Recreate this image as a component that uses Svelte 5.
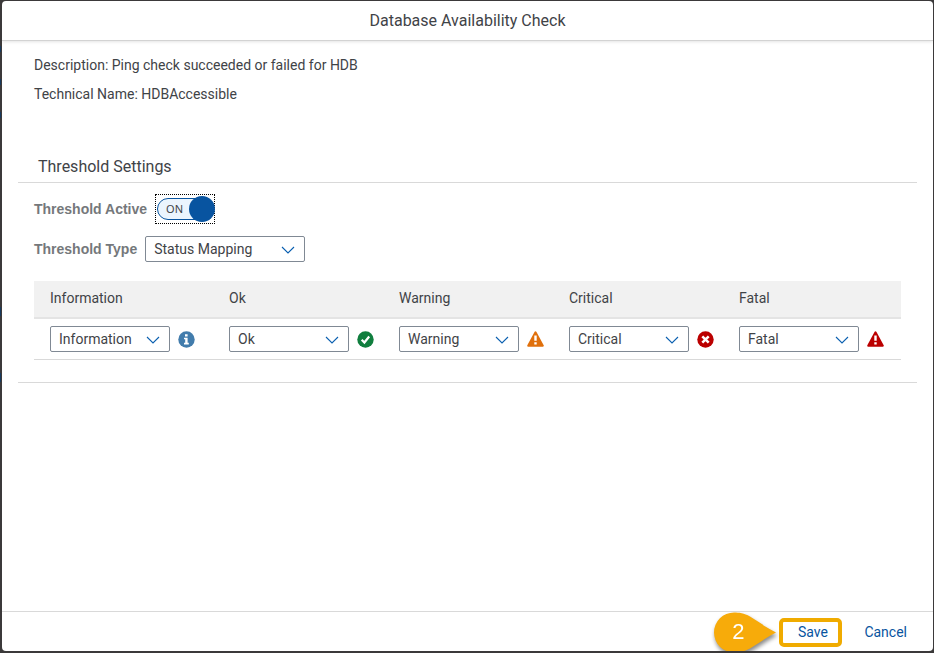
<script>
  const levels = [
    { name: 'Information', icon: 'info' },
    { name: 'Ok', icon: 'ok' },
    { name: 'Warning', icon: 'warning' },
    { name: 'Critical', icon: 'critical' },
    { name: 'Fatal', icon: 'fatal' }
  ];
  const names = levels.map((l) => l.name);
  let mapping = $state([...names]);
  let type = $state('Status Mapping');
  let active = $state(true);
</script>

{#snippet chevron()}
  <svg class="chevron" viewBox="0 0 14 8" aria-hidden="true">
    <path d="M1 1l6 6 6-6" fill="none" stroke="#0a5fb0" stroke-width="1.1" />
  </svg>
{/snippet}

{#snippet statusIcon(kind)}
  <svg class="status" viewBox="0 0 17 17" role="img" aria-label={kind}>
    {#if kind === 'info'}
      <circle cx="8.5" cy="8.5" r="8.2" fill="#427cac" />
      <path d="M7 3.2h2.6v2.3H7zM6 6.8h3.6v5h1.2v1.6H6v-1.6h1.2V8.3H6z" fill="#fff" />
    {:else if kind === 'ok'}
      <circle cx="8.5" cy="8.5" r="8.2" fill="#107e3e" />
      <path d="M4.7 8.7l2.7 2.8 4.8-6" fill="none" stroke="#fff" stroke-width="2.2" />
    {:else if kind === 'critical'}
      <circle cx="8.5" cy="8.5" r="8.2" fill="#bb0000" />
      <path d="M5.3 5.3l6.4 6.4M11.7 5.3l-6.4 6.4" stroke="#fff" stroke-width="2.5" />
    {:else}
      <path
        d="M8.5 1.3L15.8 14.7H1.2z"
        fill={kind === 'fatal' ? '#bb0000' : '#e0700c'}
        stroke={kind === 'fatal' ? '#bb0000' : '#e0700c'}
        stroke-width="2"
        stroke-linejoin="round"
      />
      <path d="M7.3 4.4h2.4v5.4H7.3zM7.3 11.2h2.4v2.3H7.3z" fill="#fff" />
    {/if}
  </svg>
{/snippet}

<div class="backdrop">
  <div class="dialog" role="dialog" aria-labelledby="title">
    <header><h1 id="title">Database Availability Check</h1></header>

    <main>
      <div class="intro">
        <p>Description: Ping check succeeded or failed for HDB</p>
        <p>Technical Name: HDBAccessible</p>
      </div>

      <section>
        <h2>Threshold Settings</h2>
        <div class="content">
          <div class="field">
            <span class="label" id="active-label">Threshold Active</span>
            <button
              class="switch"
              class:off={!active}
              type="button"
              role="switch"
              aria-checked={active}
              aria-labelledby="active-label"
              onclick={() => (active = !active)}
            >
              <span class="track">{active ? 'ON' : 'OFF'}</span>
              <span class="knob"></span>
            </button>
          </div>
          <div class="field">
            <label class="label" for="type">Threshold Type</label>
            <span class="select wide">
              <select id="type" bind:value={type}>
                <option>Status Mapping</option>
              </select>
              {@render chevron()}
            </span>
          </div>

          <table>
            <thead>
              <tr>
                {#each levels as level}
                  <th scope="col">{level.name}</th>
                {/each}
              </tr>
            </thead>
            <tbody>
              <tr>
                {#each levels as level, i}
                  <td>
                    <div class="cell">
                      <span class="select">
                        <select aria-label={level.name} bind:value={mapping[i]}>
                          {#each names as name}
                            <option>{name}</option>
                          {/each}
                        </select>
                        {@render chevron()}
                      </span>
                      {@render statusIcon(level.icon)}
                    </div>
                  </td>
                {/each}
              </tr>
            </tbody>
          </table>
        </div>
      </section>
    </main>

    <footer>
      <div class="save-wrap">
        <div class="callout">
          <svg viewBox="0 0 64 42" aria-hidden="true">
            <path
              d="M63 20.5C52 15 45 9 37 4.500C31 1 26 .5 21 .5a20 20 0 0 0 0 40C26 40.500 31 39.500 37 36.500C45 32 52 26 63 20.500z"
              fill="#f7ab0a"
            />
          </svg>
          <span>2</span>
        </div>
        <button class="save" type="button">Save</button>
      </div>
      <button class="cancel" type="button">Cancel</button>
    </footer>
  </div>
</div>

<style>
  :global(body) {
    margin: 0;
  }
  .backdrop {
    box-sizing: border-box;
    display: flex;
    min-height: 100vh;
    padding: 1px 1px 2px 2px;
    background:
      linear-gradient(
          #0000 46px,
          #173a5e 46px 52px,
          #0000 52px 79px,
          #173a5e 79px 85px,
          #0000 85px 112px,
          #173a5e 112px 118px,
          #0000 118px 307px,
          #173a5e 307px 316px,
          #0000 316px 373px,
          #173a5e 373px 382px,
          #0000 382px
        )
        0 0 / 1px 100% no-repeat,
      #3b393a;
    color: #3f4347;
    font: 14px/20px Roboto, 'Liberation Sans', sans-serif;
  }
  .dialog {
    display: flex;
    flex: 1;
    flex-direction: column;
    min-width: 0;
    overflow: hidden;
    border-radius: 4px;
    background: #fff;
  }
  header {
    display: flex;
    align-items: center;
    justify-content: center;
    height: 39px;
    border-bottom: 1px solid #d3d3d3;
    box-shadow: 0 1px 3px #0000001c;
  }
  h1,
  h2,
  p {
    margin: 0;
    font-weight: 400;
  }
  h1 {
    font-size: 16px;
  }
  main {
    flex: 1;
    padding: 14px 16px 0;
  }
  .intro {
    display: grid;
    gap: 9px;
    padding: 0 16px 48px;
  }
  section {
    border-bottom: 1px solid #d9d9d9;
  }
  h2 {
    padding: 5px 20px;
    border-bottom: 1px solid #d9d9d9;
    font-size: 16px;
    line-height: 20px;
  }
  .content {
    padding: 6px 16px 22px;
  }
  .field {
    display: flex;
    align-items: center;
    gap: 8px;
    height: 40px;
  }
  .label {
    color: #75787b;
    font-family: 'Liberation Sans', sans-serif;
    font-weight: 700;
  }
  .switch {
    position: relative;
    width: 60px;
    height: 30px;
    padding: 0 1px;
    border: 1px dotted #000;
    background: none;
    color: #3f4347;
    font: 11px/20px 'Noto Sans', sans-serif;
    text-align: left;
  }
  .track {
    display: block;
    padding-left: 8px;
    border: 1px solid #0854a0;
    border-radius: 12px;
    background: #ebf5fe;
  }
  .knob {
    position: absolute;
    top: 1px;
    right: -1px;
    width: 26px;
    height: 26px;
    border-radius: 50%;
    background: #0854a0;
  }
  .off .knob {
    right: 33px;
  }
  .select {
    position: relative;
    width: 120px;
    height: 26px;
  }
  .select.wide {
    width: 160px;
  }
  select {
    box-sizing: border-box;
    width: 100%;
    height: 26px;
    padding: 0 32px 0 8px;
    appearance: none;
    border: 1px solid #808994;
    border-radius: 2px;
    background: #fff;
    color: inherit;
    font: inherit;
  }
  .chevron {
    position: absolute;
    top: 10px;
    right: 10px;
    width: 14px;
    height: 8px;
    pointer-events: none;
  }
  table {
    width: 100%;
    margin-top: 12px;
    border-collapse: separate;
    border-spacing: 0;
    table-layout: fixed;
  }
  th {
    width: 170px;
    box-sizing: border-box;
    height: 38px;
    padding: 0 0 2px 8px;
    border-bottom: 2px solid #e4e4e4;
    background: #f1f1f1;
    font-weight: 400;
    text-align: left;
  }
  th:first-child {
    width: auto;
    padding-left: 16px;
  }
  td {
    padding: 7px 0 7px 8px;
    border-bottom: 1px solid #d9d9d9;
  }
  td:first-child {
    padding-left: 16px;
  }
  .cell {
    display: flex;
    align-items: center;
    gap: 8px;
  }
  .status {
    width: 17px;
    height: 17px;
  }
  footer {
    display: flex;
    align-items: center;
    justify-content: flex-end;
    gap: 12px;
    height: 39px;
    padding: 0 16px 0 0;
    border-top: 1px solid #d9d9d9;
  }
  footer button {
    border: 0;
    background: #fff;
    color: #0854a0;
    font: inherit;
  }
  .save-wrap {
    position: relative;
    padding-top: 2px;
  }
  .save {
    box-sizing: border-box;
    width: 63px;
    height: 29px;
    border: 4px solid #f0ab00 !important;
    border-radius: 5px;
    padding: 0 0 1px 4px;
  }
  .cancel {
    padding: 0 10px;
  }
  .callout {
    position: absolute;
    top: -4px;
    right: 65px;
    width: 64px;
    height: 42px;
    filter: drop-shadow(1px 3px 2px #0007);
  }
  .callout svg {
    display: block;
    width: 64px;
    height: 42px;
  }
  .callout span {
    position: absolute;
    top: 0;
    left: 0;
    width: 50px;
    color: #fff;
    font: 22px/40px 'Liberation Sans', sans-serif;
    text-align: center;
  }
</style>
